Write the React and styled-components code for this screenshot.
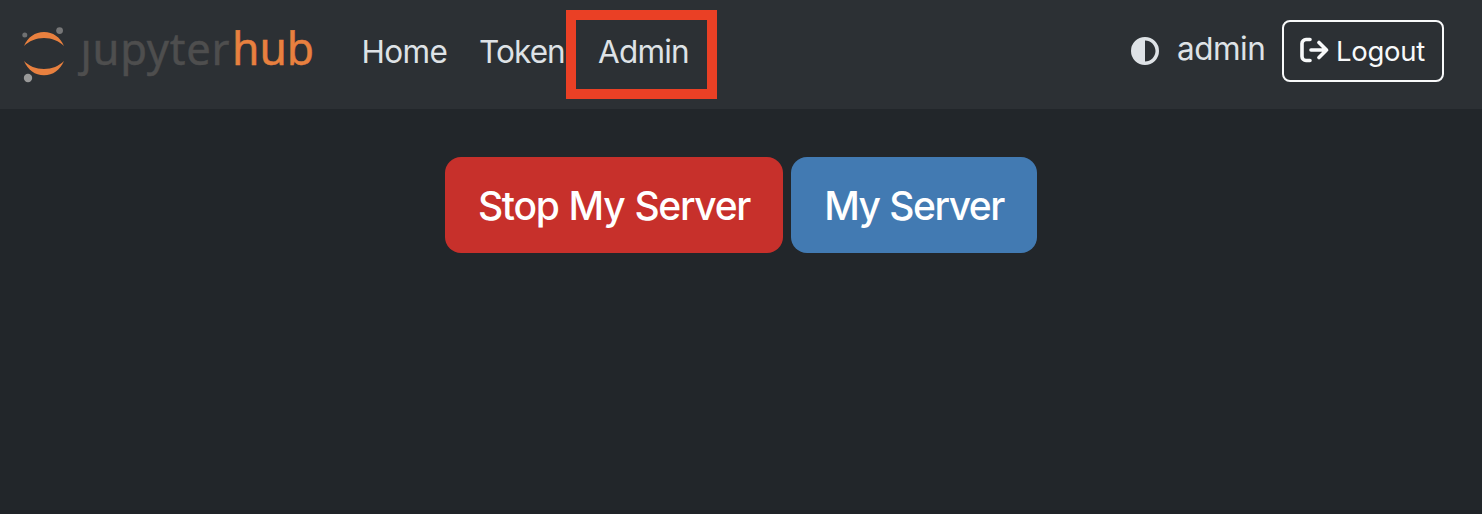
import React from "react";
import styled, { createGlobalStyle } from "styled-components";

const GlobalStyle = createGlobalStyle`
  * { box-sizing: border-box; }
  body {
    margin: 0;
    background: #22262a;
    color: #dee2e6;
    font-family: Inter, "Liberation Sans", sans-serif;
    font-weight: 425;
    -webkit-font-smoothing: antialiased;
  }
`;

const Page = styled.div`
  display: flex;
  flex-direction: column;
  height: 514px;
  overflow: hidden;
  border-bottom: 4px solid #1f2327;
`;

const Navbar = styled.nav`
  display: flex;
  align-items: flex-start;
  height: 109px;
  flex: none;
  background: #2c3034;
  padding-right: 38px;
`;

const Logo = styled.svg`
  display: block;
  width: 330px;
  height: 109px;
  flex: none;
  font-family: "Noto Sans", sans-serif;
  font-weight: 400;
`;

const NavLinks = styled.div`
  display: flex;
  align-items: flex-start;
  padding-top: 10px;
`;

const NavLink = styled.a`
  position: relative;
  width: ${(p) => p.$width}px;
  height: 89px;
  padding-left: ${(p) => p.$indent}px;
  font-size: 31.5px;
  line-height: 84px;
  letter-spacing: ${(p) => p.$tracking}px;
  white-space: nowrap;
`;

const Highlighted = styled(NavLink)`
  border: 10px solid #ea4025;
  line-height: 64px;
`;

const UserArea = styled.div`
  display: flex;
  align-items: center;
  margin-left: auto;
  padding-top: 20px;
`;

const ThemeIcon = styled.svg`
  width: 28px;
  height: 28px;
  margin-right: 18px;
`;

const UserName = styled.span`
  font-size: 31.5px;
  line-height: 40px;
  letter-spacing: -0.5px;
  width: 105px;
  padding-bottom: 4px;
  white-space: nowrap;
`;

const LogoutButton = styled.a`
  display: flex;
  align-items: center;
  width: 162px;
  height: 62px;
  padding-left: 16px;
  border: 2px solid #f8f9fa;
  border-radius: 8px;
  color: #f8f9fa;
  font-size: 27.5px;
  letter-spacing: -0.3px;
  white-space: nowrap;
`;

const LogoutIcon = styled.svg`
  width: 29px;
  height: 26px;
  margin: 0 7px 2px 0;
`;

const Main = styled.main`
  display: flex;
  justify-content: center;
  gap: 8px;
  padding-top: 48px;
`;

const ServerButton = styled.a`
  width: ${(p) => p.$width}px;
  height: 96px;
  border-radius: 16px;
  background: ${(p) => p.$color};
  color: #fff;
  font-size: 39px;
  font-weight: 450;
  line-height: 98px;
  letter-spacing: ${(p) => p.$tracking}px;
  word-spacing: 1px;
  text-align: center;
  white-space: nowrap;
`;

export default function App() {
  return (
    <Page>
      <GlobalStyle />
      <Navbar>
        <Logo viewBox="0 0 330 109" role="img" aria-label="jupyterhub">
          <path d="M24 46C28 37 35 32 44 32S60 37 64 46C59 41 52 38 44 38S29 41 24 46Z" fill="#e8803f" />
          <path d="M24 61C28 70 35 75.300 44 75.300S60 70 64 61C59 66 52 69 44 69S29 66 24 61Z" fill="#e8803f" />
          <circle cx="24.800" cy="35" r="2.500" fill="#6f7071" />
          <circle cx="59.600" cy="30.600" r="3.400" fill="#767677" />
          <circle cx="28" cy="78" r="4.200" fill="#999" />
          <text x="80.500" y="65" fontSize="43.500" fill="#4e4e4e" stroke="#4e4e4e" strokeWidth="0.500" textLength="149">ȷupyter</text>
          <text x="232" y="65" fontSize="45" fill="#e8803f" stroke="#e8803f" strokeWidth="0.500" textLength="82" lengthAdjust="spacingAndGlyphs">hub</text>
        </Logo>
        <NavLinks>
          <NavLink $width={134} $indent={31.5} $tracking={-0.6}>Home</NavLink>
          <NavLink $width={102} $indent={15} $tracking={-0.9}>Token</NavLink>
          <Highlighted $width={151} $indent={22} $tracking={-0.8}>Admin</Highlighted>
        </NavLinks>
        <UserArea>
          <ThemeIcon viewBox="0 0 512 512" fill="#dee2e6">
            <path d="M448 256c0-106-86-192-192-192V448c106 0 192-86 192-192zM0 256a256 256 0 1 1 512 0A256 256 0 1 1 0 256z" />
          </ThemeIcon>
          <UserName>admin</UserName>
          <LogoutButton>
            <LogoutIcon viewBox="0 0 29 26" fill="none" stroke="#f8f9fa" strokeWidth="3.600" strokeLinecap="round" strokeLinejoin="round">
              <path d="M10 2.500H6A4 4 0 0 0 2 6.500V19.500A4 4 0 0 0 6 23.500H10M11 13H26.500M19 5.500L26.500 13L19 20.500" />
            </LogoutIcon>
            Logout
          </LogoutButton>
        </UserArea>
      </Navbar>
      <Main>
        <ServerButton $width={338} $color="#c7302b" $tracking={-1.3}>Stop My Server</ServerButton>
        <ServerButton $width={246} $color="#427ab2" $tracking={-1.5}>My Server</ServerButton>
      </Main>
    </Page>
  );
}
